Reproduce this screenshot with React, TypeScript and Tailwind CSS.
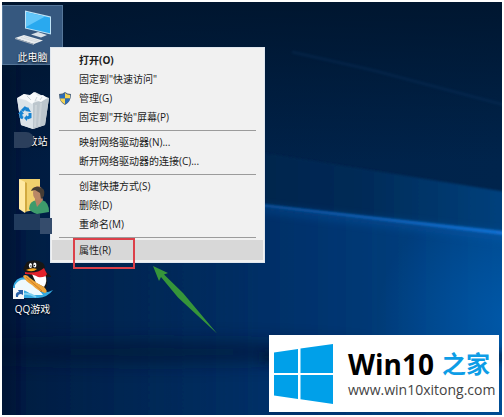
import type { ReactNode } from 'react'

const menuGroups = [
  [
    { label: '打开(O)', bold: true },
    { label: '固定到"快速访问"' },
    { label: '管理(G)', shield: true },
    { label: '固定到"开始"屏幕(P)' },
  ],
  [{ label: '映射网络驱动器(N)...' }, { label: '断开网络驱动器的连接(C)...' }],
  [{ label: '创建快捷方式(S)' }, { label: '删除(D)' }, { label: '重命名(M)' }],
]

function Wallpaper() {
  return (
    <svg
      className="absolute inset-0 h-full w-full"
      viewBox="0 0 500 413"
      preserveAspectRatio="none"
      aria-hidden="true"
    >
      <defs>
        <linearGradient id="base" x1="0" y1="0" x2="1" y2="0">
          <stop offset="0" stopColor="#001a3f" />
          <stop offset="0.3" stopColor="#002148" />
          <stop offset="1" stopColor="#00244c" />
        </linearGradient>
        <linearGradient id="top" x1="0" y1="0" x2="0" y2="1">
          <stop offset="0" stopColor="#001329" stopOpacity="0.8" />
          <stop offset="1" stopColor="#001329" stopOpacity="0" />
        </linearGradient>
        <linearGradient id="band" x1="0" y1="0" x2="1" y2="0">
          <stop offset="0" stopColor="#002148" />
          <stop offset="0.5" stopColor="#002a56" />
          <stop offset="1" stopColor="#00427f" />
        </linearGradient>
        <linearGradient id="lower" x1="0" y1="0" x2="1" y2="0">
          <stop offset="0" stopColor="#002a5c" stopOpacity="0" />
          <stop offset="0.5" stopColor="#003069" stopOpacity="0.9" />
          <stop offset="1" stopColor="#00488c" />
        </linearGradient>
        <linearGradient id="beam" x1="0" y1="0" x2="1" y2="0">
          <stop offset="0" stopColor="#0f4f96" />
          <stop offset="1" stopColor="#1272d6" />
        </linearGradient>
        <radialGradient id="glow" cx="1" cy="0.45" r="0.5">
          <stop offset="0" stopColor="#005cb0" stopOpacity="0.8" />
          <stop offset="1" stopColor="#005cb0" stopOpacity="0" />
        </radialGradient>
        <filter id="crisp" x="-5%" y="-20%" width="110%" height="140%">
          <feGaussianBlur stdDeviation="0.8" />
        </filter>
        <filter id="soft" x="-20%" y="-100%" width="140%" height="300%">
          <feGaussianBlur stdDeviation="4" />
        </filter>
        <filter id="softer" x="-20%" y="-100%" width="140%" height="300%">
          <feGaussianBlur stdDeviation="9" />
        </filter>
      </defs>
      <rect width="500" height="413" fill="url(#base)" />
      <rect width="500" height="160" fill="url(#top)" />
      <path d="M290 50 L370 68 L510 105" stroke="#0a3a6c" strokeWidth="3" opacity="0.25" fill="none" filter="url(#crisp)" />
      <path d="M200 142 L262 151 L510 191 L510 240 L200 204Z" fill="url(#band)" filter="url(#crisp)" />
      <path d="M0 200 L262 202 L510 234 L510 420 L0 420Z" fill="url(#lower)" filter="url(#crisp)" />
      <path d="M240 202 L510 231 L510 460 L240 460Z" fill="url(#glow)" />
      <path d="M240 202 L510 231 L510 240 L240 207Z" fill="#0d5cb0" opacity="0.4" filter="url(#soft)" />
      <path d="M240 200 L510 230 L510 234 L240 202Z" fill="url(#beam)" filter="url(#crisp)" />
      <ellipse cx="150" cy="350" rx="220" ry="11" fill="#001433" opacity="0.6" filter="url(#softer)" />
      <rect x="260" y="350" width="260" height="10" fill="#001433" opacity="0.6" filter="url(#soft)" />
      <rect x="-10" y="60" width="24" height="370" fill="#001029" opacity="0.5" filter="url(#softer)" />
    </svg>
  )
}

function ComputerIcon() {
  return (
    <svg width="40" height="40" viewBox="0 0 40 40" aria-hidden="true">
      <path d="M12 2.500 L38 8.500 L38 26.500 L12 20.500Z" fill="#bfe3f7" />
      <path d="M13 4 L37 9.500 L37 25.200 L13 19.700Z" fill="#29a9ef" />
      <path d="M13 4 L32 8.400 L13 19Z" fill="#62c6fa" />
      <path d="M18 26.500 L25 24 L34 27 L28 29.500Z" fill="#d9e1e8" />
      <path d="M2 30 L11 27 L30 32.500 L21 36Z" fill="#e9edf0" />
      <path d="M2 30 L21 36 L21 37 L2 31Z" fill="#aab3bc" />
      <path d="M8 29.500 L24 34 M11 28.500 L26 33" stroke="#cdd4da" strokeWidth="0.700" />
    </svg>
  )
}

function RecycleBinIcon() {
  return (
    <svg width="40" height="40" viewBox="0 0 40 40" aria-hidden="true">
      <path d="M4 6 L11 2 L17 3 L22 0 L28 3 L36 6 L32 33 L20 37 L8 33Z" fill="#e3e8eb" />
      <path d="M4 6 L20 11 L20 37 L8 33Z" fill="#dbe3e8" />
      <path d="M20 11 L36 6 L32 33 L20 37Z" fill="#bcc6cd" />
      <path d="M5 6 L11 2 L16 4 L21 0 L25 4 L30 3 L34 6 L28 10 L23 8 L19 12 L13 8Z" fill="#f8fafb" />
      <path d="M14 4 L18 8 M24 5 L22 9 M29 5 L27 8" stroke="#cbd3d8" />
      <path d="M23 13 L22 35 M28 11 L26 34" stroke="#cbd3d8" strokeWidth="2" />
      <g stroke="#1683d2" strokeWidth="3" fill="none">
        <path d="M9 19 L12 16 L14 17" />
        <path d="M17 21 L17 25 L14 26" />
        <path d="M10 26 L8 25 L8 22" />
      </g>
      <path d="M15 15 L18 20 L12 19Z M14 23 L14 29 L11 26Z M5 22 L8 18 L11 22Z" fill="#1683d2" />
    </svg>
  )
}

function UserFolderIcon() {
  return (
    <svg width="40" height="40" viewBox="0 0 40 40" aria-hidden="true">
      <path d="M6 3 L27 3 L27 33 L11 36Z" fill="#f1d16e" />
      <path d="M6 3 L12 6 L12 37 L6 33Z" fill="#ffe9a3" />
      <path d="M12 6 L14 7 L14 34 L12 37Z" fill="#d1a940" />
      <path d="M16 33 Q16 25 24 24 L29 24 Q36 26 36 36 L24 38 Q18 36 16 33Z" fill="#3e9b6c" />
      <path d="M22 24 L24 31 L30 24 L29 21 L22 21Z" fill="#b88163" />
      <ellipse cx="25" cy="17" rx="5" ry="7" fill="#b98766" />
      <path d="M18 15 Q20 10 26 11 Q33 12 31 20 L28 23 L27 17 L22 14Z" fill="#463d35" />
    </svg>
  )
}

function QQGameIcon() {
  return (
    <svg width="42" height="40" viewBox="0 0 42 40" aria-hidden="true">
      <path d="M1 27 Q3 17 13 17 Q20 20 26 31 Q34 34 41 30 Q36 37 26 38 L8 38 L2 34Z" fill="#35a9e0" />
      <path d="M3 25 Q8 18 15 20 Q25 26 31 35 L20 35 Q11 28 3 30Z" fill="#eef9fd" />
      <path d="M11 34 Q18 33 24 37" stroke="#7fd0f0" strokeWidth="2" fill="none" />
      <path d="M30 12 Q37 12 39 17 L34 17Z" fill="#171717" />
      <path d="M16 12 Q32 10 35 19 Q36 27 31 32 L22 25Z" fill="#171717" />
      <path d="M20 14 L33 14 Q36 22 32 27 L24 23Z" fill="#fff" />
      <path d="M15 2 Q23 -2 31 3 Q35 8 31 12 L16 13 Q10 11 12 7Z" fill="#171717" />
      <ellipse cx="18.500" cy="5.500" rx="1.600" ry="2.500" fill="#fff" />
      <ellipse cx="22.800" cy="5" rx="1.600" ry="2.500" fill="#fff" />
      <circle cx="18.900" cy="6" r="0.700" fill="#111" />
      <circle cx="22.300" cy="5.500" r="0.700" fill="#111" />
      <path d="M14 10 Q20 7 25 9 Q21 13 14 10Z" fill="#f4a61d" />
      <path d="M13 12 Q25 14 32 8 L35 14 Q33 18 26 17 Q22 14 13 14Z" fill="#e2222b" />
      <path d="M11 16 Q14 13 18 18 L25 23 L32 27 Q37 32 33 33 Q26 31 20 25 Q13 21 11 16Z" fill="#eea63b" />
      <path d="M14 17 L30 31" stroke="#c9711f" strokeWidth="0.800" />
      <rect x="1" y="28" width="11" height="11" fill="#f4f6f8" />
      <path d="M4 37 Q3 32 7 32 L6 30 L11 30 L11 35 L9 34 Q6 34 6 37Z" fill="#2860a8" />
    </svg>
  )
}

function ShieldIcon() {
  return (
    <svg width="12" height="13" viewBox="0 0 12 13" aria-hidden="true">
      <path d="M6 0 Q8 2 12 2 Q12 10 6 13 Q0 10 0 2 Q4 2 6 0Z" fill="#49617b" />
      <path d="M6 1 L6 6.500 L1 6.500 L1 3 Q4 3 6 1Z" fill="#2b6cb8" />
      <path d="M6 1 Q8 3 11 3 L11 6.500 L6 6.500Z" fill="#f4d453" />
      <path d="M1 6.500 L6 6.500 L6 12 Q2 10 1 6.500Z" fill="#f4d453" />
      <path d="M6 6.500 L11 6.500 Q10 10 6 12Z" fill="#2b6cb8" />
    </svg>
  )
}

function WindowsLogo() {
  return (
    <svg className="shrink-0" width="59" height="60" viewBox="0 0 59 60" fill="#00a0e9" aria-hidden="true">
      <path d="M0 8.500 L24 5 L24 29 L0 29Z" />
      <path d="M26.500 4.600 L59 0 L59 29 L26.500 29Z" />
      <path d="M0 31 L24 31 L24 55 L0 51.500Z" />
      <path d="M26.500 31 L59 31 L59 60 L26.500 55.300Z" />
    </svg>
  )
}

function DesktopIcon({
  label,
  selected,
  icon,
  children,
}: {
  label: string
  selected?: boolean
  icon: ReactNode
  children?: ReactNode
}) {
  return (
    <button
      type="button"
      className={`relative flex h-[60px] w-[61px] flex-col items-center gap-0.5 border pt-0.5 text-[10px] leading-[14px] text-white ${
        selected ? 'border-[#56779a] bg-[#36587f]' : 'border-transparent'
      }`}
    >
      {icon}
      <span className="whitespace-nowrap [text-shadow:0_1px_2px_#000]">{label}</span>
      {children}
    </button>
  )
}

function MenuItem({ label, bold, shield }: { label: string; bold?: boolean; shield?: boolean }) {
  return (
    <button
      type="button"
      role="menuitem"
      className={`grid h-[19px] w-full grid-cols-[20px_1fr] items-center pl-2 text-left ${bold ? 'font-bold' : ''}`}
    >
      <span>{shield && <ShieldIcon />}</span>
      <span className="whitespace-nowrap">{label}</span>
    </button>
  )
}

function ContextMenu() {
  return (
    <div
      role="menu"
      className="absolute left-12 top-[45px] w-[215px] border border-[#dfe6ee] bg-[#f1f1f1] pb-0.5 pt-[3px] text-[10px] text-[#1c1c1c]"
    >
      {menuGroups.map((group, i) => (
        <div key={i}>
          {group.map((item) => (
            <MenuItem key={item.label} {...item} />
          ))}
          <div role="separator" className="mx-2 flex h-1.5 items-center">
            <div className="h-px w-full bg-[#9b9b9b]" />
          </div>
        </div>
      ))}
      <div className="relative mx-px h-5 bg-[#d8d8d8]">
        <button type="button" role="menuitem" className="block h-full w-full pl-[27px] text-left">
          属性(R)
        </button>
        <div className="pointer-events-none absolute -top-0.5 left-[21px] h-[31px] w-[62px] border-2 border-[#dc4049]" />
        <svg className="absolute left-[100px] top-6" width="68" height="72" viewBox="0 0 68 72" aria-hidden="true">
          <path d="M1 2 L16 9 L12 10.500 L31 29 L65 69.500 L26 33.500 L9 13 L7 17Z" fill="#36953a" />
        </svg>
      </div>
    </div>
  )
}

function SiteBadge() {
  return (
    <div className="absolute bottom-[3px] right-[3px] flex h-[77px] w-[230px] items-center gap-[15px] bg-white pl-[5px]">
      <WindowsLogo />
      <div className="flex flex-col whitespace-nowrap">
        <div className="flex items-center gap-2 font-bold leading-8">
          <span className="text-[28px] text-black">Win10</span>
          <span className="text-[24px] text-[#0d9de6]">之家</span>
        </div>
        <a href="#" className="text-[14px] leading-5 text-[#444]">
          www.win10xitong.com
        </a>
      </div>
    </div>
  )
}

export default function App() {
  return (
    <div className="flex min-h-screen bg-white p-0.5 font-['Open_Sans','Noto_Sans_CJK_SC',sans-serif]">
      <main className="relative flex-1 overflow-hidden bg-[#00244f]">
        <Wallpaper />
        <div className="relative flex flex-col items-start gap-6 pt-[3px]">
          <DesktopIcon label="此电脑" selected icon={<ComputerIcon />} />
          <DesktopIcon label="回收站" icon={<RecycleBinIcon />}>
            <span className="absolute bottom-0 left-[11px] h-4 w-5 rounded-r-lg bg-[#2b3f5c]" />
          </DesktopIcon>
          <DesktopIcon label="" icon={<UserFolderIcon />}>
            <span className="absolute bottom-0.5 left-[11px] h-4 w-[26px] bg-[#213b5d]" />
            <span className="absolute -bottom-0.5 left-[37px] z-10 h-4 w-3 bg-[#354c6c]" />
          </DesktopIcon>
          <DesktopIcon label="QQ游戏" icon={<QQGameIcon />} />
        </div>
        <ContextMenu />
        <SiteBadge />
      </main>
    </div>
  )
}
